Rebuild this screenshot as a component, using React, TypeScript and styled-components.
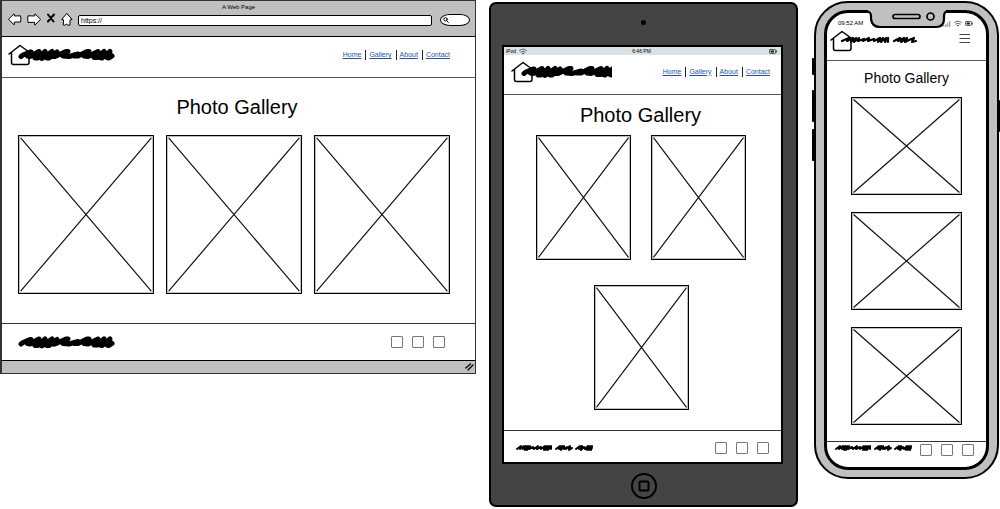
import React from "react";
import styled, { createGlobalStyle, css } from "styled-components";

const GlobalStyle = createGlobalStyle`
  *, *::before, *::after { box-sizing: border-box; }
  body { margin: 0; background: #fff; color: #000; font-family: "Liberation Sans", Arial, sans-serif; }
  svg { display: block; flex: none; }
  button, input { font: inherit; color: inherit; margin: 0; padding: 0; border: 0; background: none; }
`;

type Device = "desktop" | "tablet" | "phone";

/* ---------- page ---------- */

const Board = styled.main`
  display: grid;
  grid-template-columns: 476fr 309fr 189fr;
  gap: 13px;
  align-items: start;
`;

/* ---------- browser window ---------- */

const BrowserWindow = styled.section`
  border: 1px solid #333;
  border-left-width: 2px;
`;

const Chrome = styled.div`
  background: #c0c0c0;
  border-bottom: 1px solid #000;
  padding-bottom: 9px;
`;

const WindowTitle = styled.div`
  font-size: 6px;
  line-height: 12px;
  text-align: center;
`;

const Toolbar = styled.div`
  display: flex;
  align-items: center;
  gap: 5px;
  height: 14px;
  padding: 0 5px 0 6px;
`;

const ToolButton = styled.button`
  display: block;
  flex: none;
`;

const AddressInput = styled.input`
  flex: 1;
  min-width: 0;
  height: 11px;
  margin-right: 3px;
  padding: 0 2px;
  border: 1px solid #000;
  border-radius: 2px;
  background: #fff;
  font-size: 7px;
`;

const SearchBox = styled.label`
  display: flex;
  align-items: center;
  width: 30px;
  height: 12px;
  padding-left: 2px;
  border: 1px solid #000;
  border-radius: 10px / 6px;
  background: #fff;
`;

const SearchInput = styled.input`
  width: 20px;
  height: 8px;
  font-size: 6px;
`;

const WindowFoot = styled.div`
  display: flex;
  justify-content: flex-end;
  align-items: center;
  height: 13px;
  padding-right: 1px;
  border-top: 1px solid #000;
  background: #c0c0c0;
`;

/* ---------- tablet ---------- */

const TabletBody = styled.section`
  margin-top: 2px;
  padding: 0 13px 0 11px;
  border: 2px solid #000;
  border-radius: 7px;
  background: #444;
`;

const TabletBezel = styled.div`
  display: flex;
  align-items: center;
  justify-content: center;
  height: 41px;
  padding-left: 2px;
`;

const Camera = styled.div`
  width: 5px;
  height: 5px;
  margin-bottom: 4px;
  border-radius: 50%;
  background: #000;
`;

const HomeButton = styled.button`
  display: block;
  margin-top: 3px;
`;

const TabletScreen = styled.div`
  border: 2px solid #000;
  background: #fff;
`;

const TabletStatus = styled.div`
  display: grid;
  grid-template-columns: 1fr auto 1fr;
  align-items: center;
  height: 8px;
  padding: 0 4px 0 2px;
  background: #dae2e5;
  font-size: 5px;
  line-height: 8px;
`;

const StatusGroup = styled.div<{ $end?: boolean }>`
  display: flex;
  align-items: center;
  gap: 3px;
  justify-content: ${(p) => (p.$end ? "flex-end" : "flex-start")};
`;

/* ---------- phone ---------- */

const PhoneBody = styled.section`
  position: relative;
  margin: 1px 1px 0 3px;
  padding: 7px 8px;
  border: 2px solid #000;
  border-radius: 34px;
  background: #c0c0c0;
`;

const SideKey = styled.span<{ $top: number; $height: number; $right?: boolean }>`
  position: absolute;
  top: ${(p) => p.$top}px;
  ${(p) => (p.$right ? "right: -3px;" : "left: -4px;")}
  width: 3px;
  height: ${(p) => p.$height}px;
  border-radius: 1px;
  background: #000;
`;

const PhoneScreen = styled.div`
  position: relative;
  border: 3px solid #000;
  border-radius: 24px;
  background: #fff;
`;

const Notch = styled.svg`
  position: absolute;
  top: -3px;
  left: 50%;
  transform: translateX(-50%);
`;

const PhoneStatus = styled.div`
  display: flex;
  justify-content: space-between;
  align-items: center;
  height: 17px;
  padding: 3px 13px 0 11px;
  font-size: 6px;
`;

/* ---------- site shared by every device ---------- */

const headerLayout = {
  desktop: css`height: 41px; padding: 0 25px 4px 5px;`,
  tablet: css`height: 40px; padding: 0 11px 6px 6px;`,
  phone: css`height: 31px; padding: 0 15px 0 2px; align-items: flex-start;`,
};

const SiteHeader = styled.header<{ $device: Device }>`
  display: flex;
  align-items: center;
  justify-content: space-between;
  border-bottom: 1px solid #555;
  ${(p) => headerLayout[p.$device]}
`;

const NavList = styled.ul`
  display: flex;
  margin: 0;
  padding: 0;
  list-style: none;
`;

const NavItem = styled.li`
  display: flex;
  align-items: center;
  height: 10px;
  font-size: 7px;
  line-height: 10px;

  & + & {
    margin-left: 4px;
    padding-left: 3px;
    border-left: 1px solid #222;
  }
`;

const NavLink = styled.a`
  color: #1f549c;
  text-decoration: underline;
`;

const MenuButton = styled.button`
  display: block;
  height: 16px;
`;

const titleLayout = {
  desktop: css`margin: 17px 3px 16px 0; font-size: 20px; line-height: 24px;`,
  tablet: css`margin: 8px 4px 8px 0; font-size: 20px; line-height: 24px;`,
  phone: css`margin: 8px 0 10px; font-size: 14px; line-height: 18px;`,
};

const PageTitle = styled.h1<{ $device: Device }>`
  font-weight: 400;
  text-align: center;
  ${(p) => titleLayout[p.$device]}
`;

const galleryLayout = {
  desktop: css`
    grid-template-columns: repeat(3, 1fr);
    gap: 12px;
    padding: 0 25px 29px 16px;
  `,
  tablet: css`
    grid-template-columns: repeat(2, 1fr);
    gap: 25px 20px;
    padding: 0 35px 20px 32px;
    & > :last-child {
      grid-column: span 2;
      justify-self: center;
      width: calc(50% - 10px);
    }
  `,
  phone: css`
    gap: 17px;
    padding: 0 24px 16px;
  `,
};

const photoRatio = { desktop: "136 / 159", tablet: "95 / 125", phone: "111 / 98" };

const GalleryGrid = styled.div<{ $device: Device }>`
  display: grid;
  ${(p) => galleryLayout[p.$device]}
`;

const PhotoFrame = styled.div<{ $device: Device }>`
  aspect-ratio: ${(p) => photoRatio[p.$device]};
  padding: 1px;
  border: 1px solid #000;
  outline: 1px solid rgba(0, 0, 0, 0.25);
  outline-offset: -2px;
`;

const footerLayout = {
  desktop: css`height: 37px; padding: 0 30px 0 16px; align-items: center;`,
  tablet: css`height: 32px; padding: 0 12px 0 12px; align-items: center; & > svg { margin-top: 2px; } & > div { margin-top: 3px; }`,
  phone: css`height: 26px; padding: 2px 12px 0 8px; align-items: flex-start;`,
};

const SiteFooter = styled.footer<{ $device: Device }>`
  display: flex;
  justify-content: space-between;
  border-top: 1px solid #333;
  ${(p) => footerLayout[p.$device]}
`;

const SocialLinks = styled.div`
  display: flex;
  gap: 9px;
`;

const SocialLink = styled.a`
  display: block;
  width: 12px;
  height: 12px;
  border: 1px solid #777;
  border-radius: 1px;
`;

/* ---------- drawings ---------- */

const WIDE_SCRIBBLE =
  "M3 9 L5 7.500 L12 4.500 L13 4.500 L9.500 8.500 L12 9 L21 4 L18 8 L17 10.500 L20 10.500 L27 4 L24 10 L24 11 L34 4 L29 10.500 L31 10.500 L39 4.500 L34 9 L37 9 L48 4 L50 4 L45 8.500 L51 9 L60 6.500 L56 8.500 L60 8.500 L69 4 L71 4 L66 8.500 L70 9 L80 4 L77 7 L76 10 L79 10 L86 4 L82 10 L84 10.500 L92 4 L89 10 L91 10.500 L94 8.500 M19 8 L35 8 M78 8 L93 8";

const FINE_SCRIBBLE =
  "M1 5 L5 2 L4 5 L8 2 L7 5 L10 2 L9 6 L12 2 L11 6 L14 2 L13 5 L17 3 L18 5 L22 2 L21 5 L25 3 L25 5 L29 2 L28 6 L31 2 L30 6 L33 2 L32 6 L35 2 L35 5 M40 5 L44 2 L43 5 L46 2 L45 6 L48 2 L48 5 L51 3 L50 5 L54 2 L53 6 L56 4 M60 5 L64 2 L63 5 L66 2 L65 6 L68 3 L69 5 L72 2 L71 6 L74 2 L73 6 L76 2 L75 6 M7 4 H35 M45 4 H55 M64 4 H76";

const FINE_LOGO_SCRIBBLE =
  "M2 5 L9 2 L7 5 L13 2 L11 6 L16 2 L14 6 L19 2 L18 5 L24 3 L23 5 L29 2 L28 5 L34 3 L34 5 L40 2 L38 6 L43 2 L41 6 L46 2 L45 6 L48 2 L48 6 M54 5 L60 2 L58 5 L64 2 L61 6 L67 2 L65 6 L69 4 L74 2 L72 6 L76 5 M11 4 H24 M37 4 H48 M60 4 H67";

const strokeProps = {
  fill: "none",
  stroke: "#000",
  strokeLinecap: "round" as const,
  strokeLinejoin: "round" as const,
};

function Logo({ device }: { device: Device }) {
  const width = device === "tablet" ? 102 : 110;
  return (
    <svg width={width} height="22" viewBox={`0 0 ${width} 22`} role="img" aria-label="Company logo" {...strokeProps}>
      <path d="M2 10 L13 1.500 L22 8 M4.500 8.500 V18.500 Q4.500 20.500 6.500 20.500 H20 Q22 20.500 22 18.500 V8" strokeWidth="1.500" fill="#fff" />
      {device === "phone" ? (
        <path d={FINE_LOGO_SCRIBBLE} transform="translate(11 6)" strokeWidth="2.200" />
      ) : (
        <path d={WIDE_SCRIBBLE} transform="translate(11 3.500)" strokeWidth="5" />
      )}
    </svg>
  );
}

function FooterMark({ device }: { device: Device }) {
  return device === "desktop" ? (
    <svg width="98" height="15" viewBox="0 0 98 15" {...strokeProps}>
      <path d={WIDE_SCRIBBLE} strokeWidth="5" />
    </svg>
  ) : (
    <svg width="78" height="8" viewBox="0 0 78 8" {...strokeProps}>
      <path d={FINE_SCRIBBLE} strokeWidth="2" />
    </svg>
  );
}

function WifiIcon() {
  return (
    <svg width="8" height="7" viewBox="0 0 8 7" {...strokeProps} stroke="#444" strokeWidth="0.800">
      <path d="M0.500 2.500 Q4 -0.500 7.500 2.500 M1.800 4 Q4 2.200 6.200 4" />
      <circle cx="4" cy="5.500" r="0.500" fill="#444" />
    </svg>
  );
}

function BatteryIcon() {
  return (
    <svg width="8" height="5" viewBox="0 0 8 5" {...strokeProps} stroke="#333" strokeWidth="0.800">
      <rect x="0.500" y="0.500" width="6" height="4" rx="0.800" />
      <path d="M7.500 1.800 V3.200" />
      <rect x="1.500" y="1.500" width="3.500" height="2" fill="#222" stroke="none" />
    </svg>
  );
}

function SignalIcon() {
  return (
    <svg width="8" height="7" viewBox="0 0 8 7" fill="none" stroke="#aaa" strokeWidth="1.400">
      <path d="M0.700 7 V5 M2.700 7 V4 M4.700 7 V2.500 M6.700 7 V1" />
    </svg>
  );
}

/* ---------- site parts ---------- */

const pages = ["Home", "Gallery", "About", "Contact"];
const networks = ["Facebook", "Instagram", "Twitter"];
const photos = [1, 2, 3];

function Site({ device }: { device: Device }) {
  return (
    <>
      <SiteHeader $device={device}>
        <Logo device={device} />
        {device === "phone" ? (
          <MenuButton type="button" aria-label="Menu">
            <svg width="12" height="16" viewBox="0 0 12 16" fill="none" stroke="#444">
              <path d="M0.500 4.500 H11 M0.500 8.500 H11 M0.500 12.500 H11" />
            </svg>
          </MenuButton>
        ) : (
          <nav>
            <NavList>
              {pages.map((page) => (
                <NavItem key={page}>
                  <NavLink href={`#${page.toLowerCase()}`}>{page}</NavLink>
                </NavItem>
              ))}
            </NavList>
          </nav>
        )}
      </SiteHeader>
      <PageTitle $device={device}>Photo Gallery</PageTitle>
      <GalleryGrid $device={device}>
        {photos.map((photo) => (
          <PhotoFrame key={photo} $device={device} role="img" aria-label={`Photo ${photo}`}>
            <svg width="100%" height="100%" viewBox="0 0 100 100" preserveAspectRatio="none" stroke="#111" strokeWidth="1.200">
              <path d="M0.500 0.500 L99.500 99.500 M99.500 0.500 L0.500 99.500" vectorEffect="non-scaling-stroke" />
            </svg>
          </PhotoFrame>
        ))}
      </GalleryGrid>
      <SiteFooter $device={device}>
        <FooterMark device={device} />
        <SocialLinks>
          {networks.map((name) => (
            <SocialLink key={name} href={`#${name.toLowerCase()}`} aria-label={name} />
          ))}
        </SocialLinks>
      </SiteFooter>
    </>
  );
}

/* ---------- devices ---------- */

function Browser() {
  return (
    <BrowserWindow>
      <Chrome>
        <WindowTitle>A Web Page</WindowTitle>
        <Toolbar>
          <ToolButton type="button" aria-label="Back">
            <svg width="14" height="14" viewBox="0 0 14 14" {...strokeProps} fill="#fff">
              <path d="M0.700 6 L6 0.800 L6.500 3 L12.500 2.800 Q13.300 6 12.600 9 L6.500 9 L6.200 11.500 Z" />
            </svg>
          </ToolButton>
          <ToolButton type="button" aria-label="Forward">
            <svg width="14" height="14" viewBox="0 0 14 14" {...strokeProps} fill="#fff">
              <path d="M13.300 6 L8 0.800 L7.700 3 L1 2.800 Q0.500 6 1 9.500 L7.500 9.200 L7.800 11.800 Z" />
            </svg>
          </ToolButton>
          <ToolButton type="button" aria-label="Stop">
            <svg width="10" height="14" viewBox="0 0 10 14" {...strokeProps} strokeWidth="2">
              <path d="M2 1.500 L7.500 8.500 M8 1.500 L2 8.500" />
            </svg>
          </ToolButton>
          <ToolButton type="button" aria-label="Start page">
            <svg width="12" height="14" viewBox="0 0 12 14" {...strokeProps} fill="#fff">
              <path d="M5.500 0.700 L0.700 6.500 L2.500 6.800 L2.300 12 Q2.500 12.500 4.500 12 L5.500 11 L7 12.300 L9 12 L9 7 L10.700 6.500 Z" />
            </svg>
          </ToolButton>
          <AddressInput type="text" aria-label="Address" defaultValue="https://" />
          <SearchBox>
            <svg width="6" height="6" viewBox="0 0 6 6" {...strokeProps} strokeWidth="1">
              <circle cx="2.500" cy="2.300" r="1.700" />
              <path d="M3.800 3.800 L5.400 5.400" />
            </svg>
            <SearchInput type="text" aria-label="Search" />
          </SearchBox>
        </Toolbar>
      </Chrome>
      <Site device="desktop" />
      <WindowFoot>
        <svg width="9" height="8" viewBox="0 0 9 8" {...strokeProps} strokeWidth="1.300">
          <path d="M0.800 5 L5.500 1 M3 7 L8 2" />
        </svg>
      </WindowFoot>
    </BrowserWindow>
  );
}

function Tablet() {
  return (
    <TabletBody>
      <TabletBezel>
        <Camera />
      </TabletBezel>
      <TabletScreen>
        <TabletStatus>
          <StatusGroup>
            <span>iPod</span>
            <WifiIcon />
          </StatusGroup>
          <span>6:46 PM</span>
          <StatusGroup $end>
            <BatteryIcon />
          </StatusGroup>
        </TabletStatus>
        <Site device="tablet" />
      </TabletScreen>
      <TabletBezel>
        <HomeButton type="button" aria-label="Home">
          <svg width="28" height="28" viewBox="0 0 28 28" {...strokeProps} strokeWidth="2">
            <circle cx="14" cy="14" r="12" />
            <rect x="9.500" y="9.500" width="9" height="9" rx="1" />
          </svg>
        </HomeButton>
      </TabletBezel>
    </TabletBody>
  );
}

function Phone() {
  return (
    <PhoneBody>
      <SideKey $top={55} $height={17} />
      <SideKey $top={87} $height={32} />
      <SideKey $top={126} $height={32} />
      <SideKey $top={97} $height={32} $right />
      <PhoneScreen>
        <Notch width="80" height="19" viewBox="0 0 80 19" {...strokeProps}>
          <path d="M1 0 H79 V2 Q77 2 77 6 V9 Q77 17 69 17 H13 Q5 17 4 9 V6 Q4 2 1 2 Z" fill="#c0c0c0" stroke="none" />
          <path d="M0 1.500 Q4 2 4 6 V9 Q5 17 13 17 H69 Q77 17 77 9 V6 Q77 2 80 1.500" strokeWidth="2.200" />
          <rect x="26" y="4.500" width="27" height="4" rx="2" strokeWidth="1.700" />
          <ellipse cx="63.500" cy="6.500" rx="3.500" ry="3.500" strokeWidth="1.700" />
        </Notch>
        <PhoneStatus>
          <span>09:52 AM</span>
          <StatusGroup $end>
            <SignalIcon />
            <WifiIcon />
            <BatteryIcon />
          </StatusGroup>
        </PhoneStatus>
        <Site device="phone" />
      </PhoneScreen>
    </PhoneBody>
  );
}

export default function App() {
  return (
    <>
      <GlobalStyle />
      <Board>
        <Browser />
        <Tablet />
        <Phone />
      </Board>
    </>
  );
}
